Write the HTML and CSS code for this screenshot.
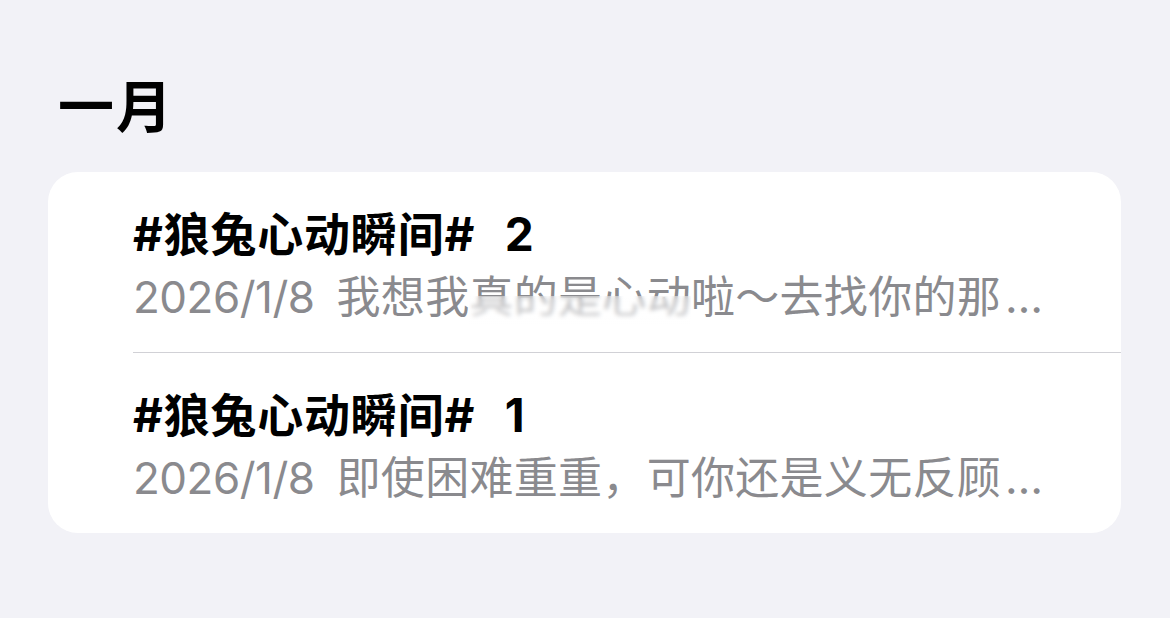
FILE: index.html
```html
<!DOCTYPE html>
<html lang="zh-CN">
<head>
<meta charset="utf-8">
<title>一月</title>
<link rel="stylesheet" href="styles.css">
</head>
<body>
  <main class="page">
    <h2 class="section-title">一月</h2>
    <ul class="note-list">
      <li class="note">
        <div class="note-title">#狼兔心动瞬间# 2</div>
        <div class="note-meta">
          <span class="note-date">2026/1/8</span><span class="note-preview">我想我<span class="smudge">真的是心动</span>啦～去找你的那<span class="ellipsis">…</span></span>
        </div>
      </li>
      <li class="note">
        <div class="note-title">#狼兔心动瞬间# 1</div>
        <div class="note-meta">
          <span class="note-date">2026/1/8</span><span class="note-preview">即使困难重重，可你还是义无反顾<span class="ellipsis">…</span></span>
        </div>
      </li>
    </ul>
  </main>
</body>
</html>
```

FILE: styles.css
```css
* {
  box-sizing: border-box;
}

html,
body {
  margin: 0;
  padding: 0;
  background: #f2f2f7;
}

body {
  font-family: Inter, "Noto Sans CJK SC", "Noto Sans", sans-serif;
  color: #000;
  -webkit-font-smoothing: antialiased;
}

.page {
  width: 1170px;
  height: 618px;
  padding: 71px 49px 0 48px;
  display: flex;
  flex-direction: column;
}

.section-title {
  margin: 0 0 37px 10px;
  font-family: "Noto Sans CJK SC", sans-serif;
  font-size: 56px;
  line-height: 64px;
  font-weight: 700;
  letter-spacing: 2px;
}

.note-list {
  list-style: none;
  margin: 0;
  padding: 0;
  background: #fff;
  border-radius: 30px;
  overflow: hidden;
}

.note {
  height: 180px;
  padding: 35px 0 0 85px;
  display: flex;
  flex-direction: column;
}

.note + .note {
  height: 181px;
  border-top: 1px solid #d1d1d6;
  margin-left: 85px;
  padding-left: 0;
}

.note-title {
  font-size: 46px;
  line-height: 54px;
  font-weight: 700;
  letter-spacing: 0.8px;
  word-spacing: 18px;
  white-space: nowrap;
}

.note-meta {
  margin-top: 10px;
  font-size: 44px;
  line-height: 52px;
  color: #8a8a8e;
  white-space: nowrap;
}

.note-date {
  margin-right: 22px;
  letter-spacing: -0.5px;
}

.note-preview {
  letter-spacing: 0.3px;
}

.ellipsis {
  letter-spacing: 4px;
  margin-left: 4px;
}

.smudge {
  position: relative;
}

/* soft smear over the lower half of a few characters */
.smudge::after {
  content: "";
  position: absolute;
  left: 0;
  right: 0;
  top: 48%;
  bottom: -2px;
  background: linear-gradient(180deg, rgba(255, 255, 255, 0.35), rgba(255, 255, 255, 0.75));
  backdrop-filter: blur(2px);
}
```
